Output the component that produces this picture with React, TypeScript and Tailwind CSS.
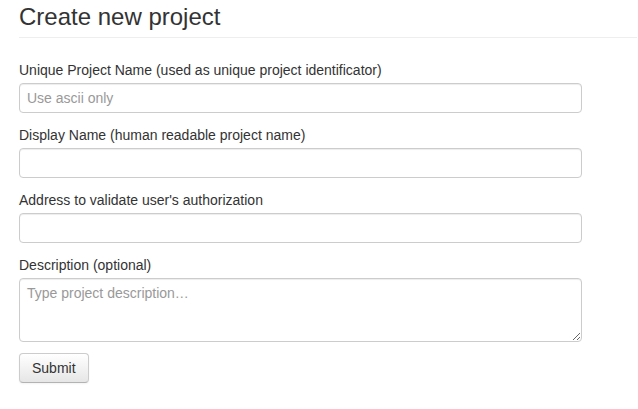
import React from 'react';

const inputClass =
  'block w-[563px] h-[30px] px-[7px] py-[4px] text-[14px] leading-[20px] text-[#555] bg-white border border-[#ccc] rounded-[4px] shadow-[inset_0_1px_1px_rgba(0,0,0,0.075)] placeholder:text-[#999] outline-none';

const Field: React.FC<{ label: string; placeholder?: string }> = ({ label, placeholder }) => (
  <div className="mb-[12px]">
    <label className="block mb-[3px] text-[14px] leading-[20px] text-[#333]">{label}</label>
    <input type="text" placeholder={placeholder} className={inputClass} />
  </div>
);

export default function App() {
  return (
    <div className="min-h-[409px] bg-white pl-[19px] pr-[1px] font-['Liberation_Sans',Arial,sans-serif] text-[#333]">
      <h1 className="mt-[4px] pb-[7px] text-[24px] leading-[26px] font-normal text-[#333] border-b border-[#eee]">
        Create new project
      </h1>

      <form className="mt-[22px]" onSubmit={(e) => e.preventDefault()}>
        <Field label="Unique Project Name (used as unique project identificator)" placeholder="Use ascii only" />
        <Field label="Display Name (human readable project name)" />
        <Field label="Address to validate user's authorization" />

        <div className="mb-[11px]">
          <label className="block mb-[3px] text-[14px] leading-[20px] text-[#333]">Description (optional)</label>
          <textarea
            placeholder="Type project description…"
            className="block w-[563px] h-[64px] px-[7px] py-[4px] text-[14px] leading-[20px] text-[#555] bg-white border border-[#ccc] rounded-[4px] shadow-[inset_0_1px_1px_rgba(0,0,0,0.075)] placeholder:text-[#999] outline-none"
          />
        </div>

        <button
          type="submit"
          className="h-[30px] px-[12px] text-[14px] leading-[20px] text-[#333] border border-[#ccc] border-b-[#b3b3b3] rounded-[4px] bg-gradient-to-b from-white to-[#e6e6e6] shadow-[inset_0_1px_0_rgba(255,255,255,0.2),0_1px_2px_rgba(0,0,0,0.05)]"
        >
          Submit
        </button>
      </form>
    </div>
  );
}
